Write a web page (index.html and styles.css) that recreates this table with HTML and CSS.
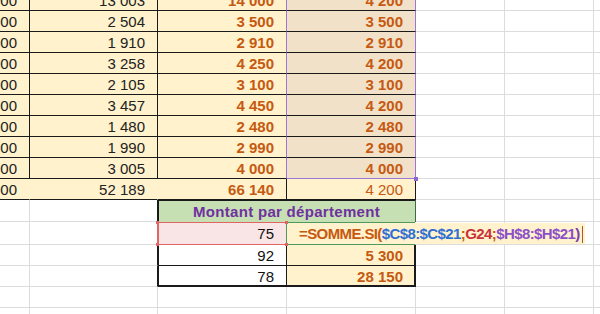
FILE: index.html
```html
<!DOCTYPE html>
<html lang="fr">
<head>
<meta charset="utf-8">
<title>Montant par département</title>
<link rel="stylesheet" href="styles.css">
</head>
<body>
<div class="sheet">
  <!-- r0 -->
  <div class="c t">1 000</div><div class="c t">13 003</div><div class="c t o pr">14 000</div><div class="c t o tan pr">4 200</div><div class="c"></div><div class="c"></div><div class="c"></div>
  <!-- r1 -->
  <div class="c t">1 000</div><div class="c t">2 504</div><div class="c t o pr">3 500</div><div class="c t o tan pr">3 500</div><div class="c"></div><div class="c"></div><div class="c"></div>
  <!-- r2 -->
  <div class="c t">1 000</div><div class="c t">1 910</div><div class="c t o pr">2 910</div><div class="c t o tan pr">2 910</div><div class="c"></div><div class="c"></div><div class="c"></div>
  <!-- r3 -->
  <div class="c t">1 000</div><div class="c t">3 258</div><div class="c t o pr">4 250</div><div class="c t o tan pr">4 200</div><div class="c"></div><div class="c"></div><div class="c"></div>
  <!-- r4 -->
  <div class="c t">1 000</div><div class="c t">2 105</div><div class="c t o pr">3 100</div><div class="c t o tan pr">3 100</div><div class="c"></div><div class="c"></div><div class="c"></div>
  <!-- r5 -->
  <div class="c t">1 000</div><div class="c t">3 457</div><div class="c t o pr">4 450</div><div class="c t o tan pr">4 200</div><div class="c"></div><div class="c"></div><div class="c"></div>
  <!-- r6 -->
  <div class="c t">1 000</div><div class="c t">1 480</div><div class="c t o pr">2 480</div><div class="c t o tan pr">2 480</div><div class="c"></div><div class="c"></div><div class="c"></div>
  <!-- r7 -->
  <div class="c t">1 000</div><div class="c t">1 990</div><div class="c t o pr">2 990</div><div class="c t o tan pr">2 990</div><div class="c"></div><div class="c"></div><div class="c"></div>
  <!-- r8 -->
  <div class="c t">1 000</div><div class="c t">3 005</div><div class="c t o pr">4 000</div><div class="c t o tan pr pb">4 000</div><div class="c"></div><div class="c"></div><div class="c"></div>
  <!-- r9 total -->
  <div class="c t nr">14 000</div><div class="c t nr">52 189</div><div class="c t o">66 140</div><div class="c t or">4 200</div><div class="c"></div><div class="c"></div><div class="c"></div>
  <!-- r10 header -->
  <div class="c"></div><div class="c bk"></div><div class="c hd">Montant par département</div><div class="c"></div><div class="c"></div><div class="c"></div>
  <!-- r11 -->
  <div class="c"></div><div class="c rd"></div><div class="c ref">75</div><div class="c fx"><span class="edit">=SOMME.SI(<span class="rb">$C$8:$C$21</span>;<span class="rr">G24</span>;<span class="rp">$H$8:$H$21</span><span class="rp2">)</span><span class="caret"></span></span></div><div class="c"></div><div class="c"></div><div class="c"></div>
  <!-- r12 -->
  <div class="c"></div><div class="c bk"></div><div class="c wt">92</div><div class="c t o rt">5 300</div><div class="c"></div><div class="c"></div><div class="c"></div>
  <!-- r13 -->
  <div class="c"></div><div class="c bk"></div><div class="c wt last">78</div><div class="c t o rt last">28 150</div><div class="c"></div><div class="c"></div><div class="c"></div>
  <!-- r14 -->
  <div class="c"></div><div class="c"></div><div class="c"></div><div class="c"></div><div class="c"></div><div class="c"></div><div class="c"></div>
  <!-- r15 -->
  <div class="c"></div><div class="c"></div><div class="c"></div><div class="c"></div><div class="c"></div><div class="c"></div><div class="c"></div>
</div>
</body>
</html>
```
FILE: styles.css
```css
html, body {
  margin: 0;
  background: #ffffff;
}
body {
  width: 600px;
  height: 314px;
  overflow: hidden;
}
.sheet {
  display: grid;
  grid-template-columns: 30px 128px 129px 129px 89px 89px 1fr;
  grid-template-rows: repeat(10, 21px) 22px 23px repeat(4, 21px);
  margin-top: -10px;
  font-family: "Liberation Sans", Arial, sans-serif;
  font-size: 15px;
  color: #222222;
}
.c {
  box-sizing: border-box;
  display: flex;
  justify-content: flex-end;
  align-items: flex-start;
  padding: 1px 12px 0 0;
  line-height: 20px;
  white-space: nowrap;
  overflow: hidden;
  min-width: 0;
  border-right: 1px solid #dcdcdc;
  border-bottom: 1px solid #dcdcdc;
}
.t {
  background: #FFF2CC;
  border-right-color: #1a1a1a;
  border-bottom-color: #1a1a1a;
}
.o {
  color: #C65911;
  font-weight: 700;
}
.or {
  color: #C65911;
}
.tan {
  background: #F2E1C9;
}
.pr {
  border-right-color: #9B78D8;
}
.pb {
  border-bottom-color: #9B78D8;
  position: relative;
  overflow: visible;
}
.pb::after {
  content: "";
  position: absolute;
  right: -3px;
  bottom: -3px;
  width: 4px;
  height: 4px;
  background: #8E66D2;
  z-index: 2;
}
.nr {
  border-right-color: transparent;
}
.bk {
  border-right-color: #1a1a1a;
}
.rd {
  border-right-color: #E06666;
}
.hd {
  grid-column: span 2;
  background: #C6E0B4;
  color: #7030A0;
  font-weight: 700;
  letter-spacing: 0.3px;
  justify-content: center;
  padding: 2px 0 0;
  border-bottom: 0;
  border-right-color: #3f6a48;
  box-shadow: inset 1px 1px 0 #1a1a1a;
}
.ref {
  background: #F9E5E5;
  color: #111111;
  padding-top: 2px;
  border-right-color: #4E9A5E;
  border-bottom-color: #E06666;
  box-shadow: inset 1px 1px 0 #E06666;
  position: relative;
  overflow: visible;
}
.ref::after {
  content: "";
  position: absolute;
  left: -2px;
  top: -1px;
  width: 3px;
  height: 3px;
  background: #E06666;
  box-shadow: 129px 0 0 #E06666, 0 22px 0 #E06666, 129px 22px 0 #E06666;
  z-index: 2;
}
.fx {
  background: #FFF2CC;
  justify-content: flex-start;
  padding: 0;
  overflow: visible;
  border-right-color: transparent;
  border-bottom-color: #4E9A5E;
  box-shadow: inset 0 1px 0 #4E9A5E;
}
.edit {
  flex: none;
  position: relative;
  z-index: 1;
  box-sizing: border-box;
  height: 21px;
  margin-top: 1px;
  padding: 1px 2px 0 12px;
  line-height: 20px;
  background: #FFF2CC;
  color: #C65911;
  font-weight: 700;
  letter-spacing: -0.6px;
}
.rb {
  color: #2F6FD4;
}
.rr {
  color: #C8323A;
}
.rp {
  color: #8B4FC9;
}
.rp2 {
  color: #7A3FB0;
}
.caret {
  display: inline-block;
  width: 1px;
  height: 17px;
  margin-left: 2px;
  vertical-align: -4px;
  background: #B35A22;
}
.wt {
  background: #ffffff;
  color: #111111;
  border-right-color: #1a1a1a;
  border-bottom-color: #1a1a1a;
  box-shadow: inset 1px 0 0 #1a1a1a;
}
.rt {
  box-shadow: inset -1px 0 0 #1a1a1a;
}
.wt.last {
  box-shadow: inset 1px -1px 0 #1a1a1a;
}
.rt.last {
  box-shadow: inset -1px -1px 0 #1a1a1a;
}
```
